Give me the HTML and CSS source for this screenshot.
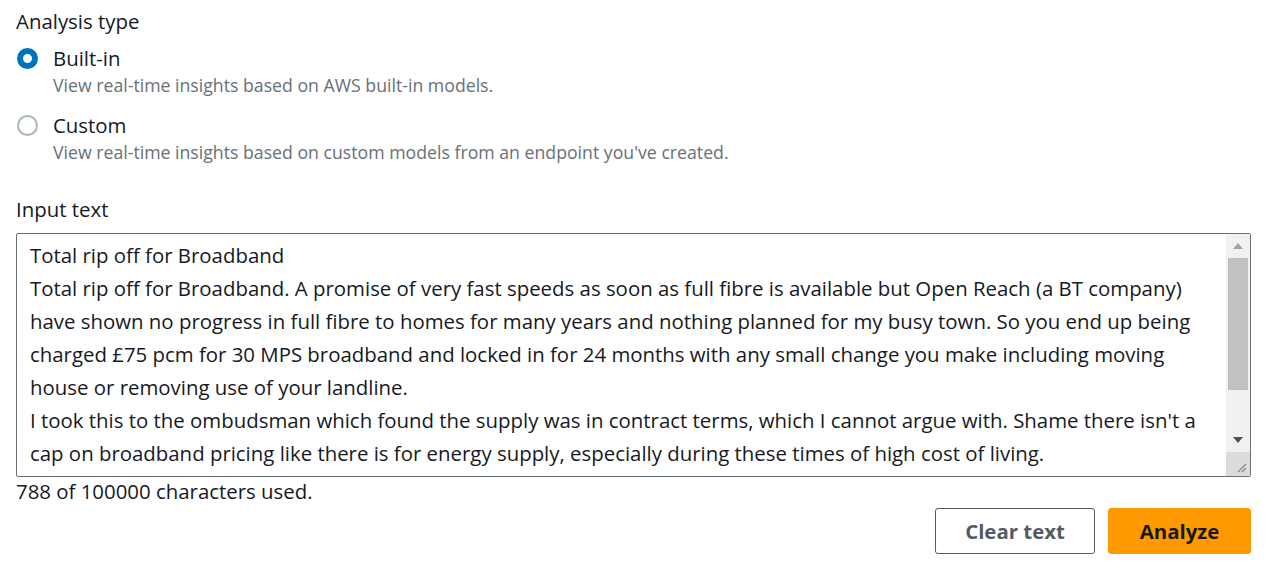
FILE: index.html
```html
<!DOCTYPE html>
<html lang="en">
<head>
<meta charset="utf-8">
<title>Analysis</title>
<link rel="stylesheet" href="styles.css">
</head>
<body>
<main class="page">
  <section class="field">
    <div class="label">Analysis type</div>
    <div class="radios">
      <div class="radio">
        <span class="dot checked"></span>
        <div class="radio-text">
          <div class="radio-label">Built-in</div>
          <div class="desc">View real-time insights based on AWS built-in models.</div>
        </div>
      </div>
      <div class="radio">
        <span class="dot"></span>
        <div class="radio-text">
          <div class="radio-label">Custom</div>
          <div class="desc">View real-time insights based on custom models from an endpoint you've created.</div>
        </div>
      </div>
    </div>
  </section>

  <section class="field input-field">
    <div class="label">Input text</div>
    <div class="textarea">
      <div class="ta-content">
        <div>Total rip off for Broadband</div>
        <div>Total rip off for Broadband. A promise of very fast speeds as soon as full fibre is available but Open Reach (a BT company)</div>
        <div>have shown no progress in full fibre to homes for many years and nothing planned for my busy town. So you end up being</div>
        <div>charged £75 pcm for 30 MPS broadband and locked in for 24 months with any small change you make including moving</div>
        <div>house or removing use of your landline.</div>
        <div>I took this to the ombudsman which found the supply was in contract terms, which I cannot argue with. Shame there isn't a</div>
        <div>cap on broadband pricing like there is for energy supply, especially during these times of high cost of living.</div>
      </div>
      <div class="scrollbar">
        <div class="sb-btn"><span class="arrow up"></span></div>
        <div class="sb-track"><div class="sb-thumb"></div></div>
        <div class="sb-btn"><span class="arrow down"></span></div>
        <div class="sb-corner">
          <svg width="24" height="24" viewBox="0 0 24 24"><path d="M20 12 L12 20 M20 16 L16 20" stroke="#8a8a8a" stroke-width="1.3" fill="none"/></svg>
        </div>
      </div>
    </div>
    <div class="counter">788 of 100000 characters used.</div>
  </section>

  <div class="actions">
    <button class="btn btn-normal">Clear text</button>
    <button class="btn btn-primary">Analyze</button>
  </div>
</main>
</body>
</html>
```

FILE: styles.css
```css
* { box-sizing: border-box; }
html, body { margin: 0; padding: 0; background: #ffffff; }
body {
  font-family: "Open Sans", "Noto Sans", sans-serif;
  color: #16191f;
  font-size: 20.4px;
  line-height: 33px;
}
.page {
  padding: 5px 22px 0 16px;
}
.label {
  line-height: 33px;
}
.radios {
  display: flex;
  flex-direction: column;
  gap: 14px;
  margin-top: 4px;
}
.radio {
  display: flex;
  gap: 15px;
}
.dot {
  flex: none;
  width: 21px;
  height: 21px;
  margin-top: 6px;
  margin-left: 1px;
  border-radius: 50%;
  border: 2px solid #aab7b8;
  background: #fff;
}
.dot.checked {
  border: 6px solid #0073bb;
}
.radio-label { line-height: 33px; }
.desc {
  font-size: 17.7px;
  line-height: 20px;
  color: #687078;
}
.input-field { margin-top: 31px; }
.textarea {
  margin-top: 7px;
  height: 244px;
  border: 1px solid #687078;
  border-radius: 2px;
  display: flex;
  overflow: hidden;
}
.ta-content {
  flex: 1;
  padding: 5px 12px 0 13px;
  white-space: nowrap;
  overflow: hidden;
  line-height: 33px;
  color: #16191f;
}
.scrollbar {
  flex: none;
  width: 24px;
  display: flex;
  flex-direction: column;
  background: #f1f1f1;
}
.sb-btn {
  height: 24px;
  display: flex;
  align-items: center;
  justify-content: center;
}
.arrow {
  width: 0; height: 0;
  border-left: 5px solid transparent;
  border-right: 5px solid transparent;
}
.arrow.up { border-bottom: 6px solid #a3a3a3; }
.arrow.down { border-top: 6px solid #505050; }
.sb-track {
  flex: 1;
  padding: 0 2px;
}
.sb-thumb {
  height: 132px;
  background: #c1c1c1;
}
.sb-corner {
  height: 24px;
  background: #dcdcdc;
}
.sb-corner svg { display: block; }
.counter {
  margin-top: -1px;
  line-height: 30px;
}
.actions {
  display: flex;
  justify-content: flex-end;
  gap: 13px;
  margin-top: 2px;
}
.btn {
  font-family: inherit;
  font-size: 20.4px;
  font-weight: 700;
  height: 46px;
  border-radius: 3px;
  padding: 0 10px;
  white-space: nowrap;
  cursor: pointer;
}
.btn-normal {
  width: 160px;
  background: #fff;
  color: #545b64;
  border: 1.5px solid #545b64;
}
.btn-primary {
  width: 143px;
  background: #ff9900;
  color: #16191f;
  border: 1.5px solid #ff9900;
}
```
